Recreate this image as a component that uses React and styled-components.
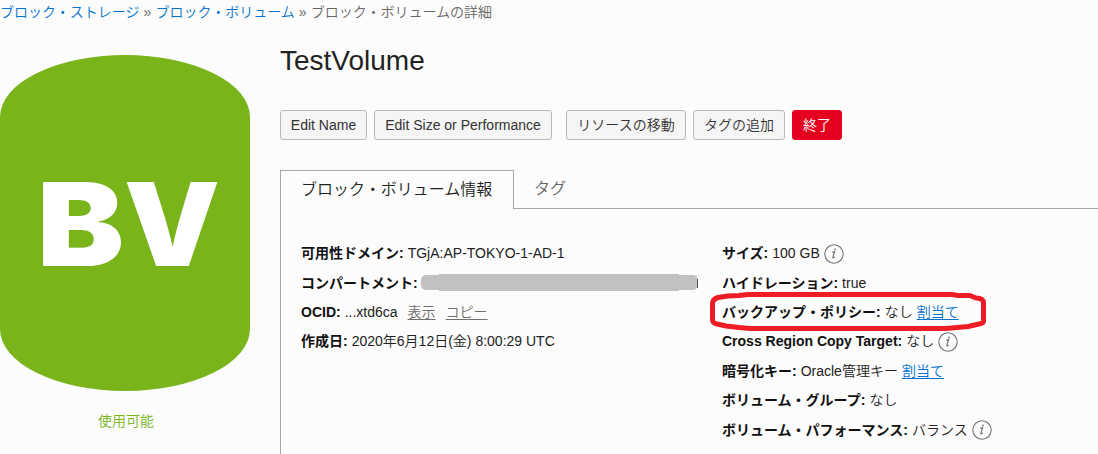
import React from 'react';
import styled, { createGlobalStyle } from 'styled-components';

const GlobalStyle = createGlobalStyle`
  * { box-sizing: border-box; }
  body {
    margin: 0;
    background: #fcfcfc;
    color: #222;
    font-family: "Liberation Sans", "Noto Sans CJK JP", sans-serif;
    font-size: 14px;
    font-weight: 350;
    overflow: hidden;
  }
`;

const Page = styled.div`
  position: relative;
  width: 1098px;
  height: 454px;
  overflow: hidden;
`;

const Breadcrumb = styled.nav`
  display: flex;
  height: 24px;
  line-height: 24px;
  color: #666;
  white-space: nowrap;
`;

const Separator = styled.span`
  width: 16px;
  text-align: center;
`;

const Crumb = styled.a`
  color: #0572ce;
`;

const Columns = styled.div`
  display: flex;
  gap: 30px;
`;

const Side = styled.aside`
  width: 250px;
  flex: none;
  padding-top: 31px;
`;

const Badge = styled.div`
  height: 336px;
  border-radius: 125px / 62px;
  background: #78b41a;

  svg { display: block; }
`;

const Status = styled.div`
  margin: 18px 0 0 2px;
  line-height: 24px;
  text-align: center;
  color: #78b41a;
`;

const Main = styled.main`
  flex: 1;
  min-width: 0;
`;

const Title = styled.h1`
  margin: 17px 0 0;
  height: 40px;
  line-height: 40px;
  font-size: 28px;
  font-weight: 400;
`;

const Toolbar = styled.div`
  display: flex;
  gap: 7px;
  margin-top: 29px;
`;

const Button = styled.button`
  width: ${(p) => p.$width}px;
  height: 30px;
  margin: 0 0 0 ${(p) => (p.$spaced ? 7 : 0)}px;
  padding: 0;
  border: 1px solid ${(p) => (p.$danger ? '#e6001f' : '#b4bac4')};
  border-radius: 3px;
  background: ${(p) => (p.$danger ? '#e6001f' : '#f5f5f5')};
  color: ${(p) => (p.$danger ? '#fff' : '#333')};
  font: inherit;
  line-height: 28px;
  white-space: nowrap;
`;

const Tabs = styled.div`
  display: flex;
  height: 39px;
  margin-top: 30px;
  font-size: 16px;
  line-height: 37px;
`;

const Tab = styled.div`
  flex: ${(p) => (p.$active ? '0 0 234px' : '1')};
  padding-left: 20px;
  border: 0 solid #a8a8a8;
  border-width: ${(p) => (p.$active ? '1px 1px 0 1px' : '0 0 1px 0')};
  color: ${(p) => (p.$active ? '#222' : '#666')};
`;

const Panel = styled.section`
  display: flex;
  height: 246px;
  padding: 30px 0 0 20px;
  border-left: 1px solid #a8a8a8;
`;

const Details = styled.div`
  width: ${(p) => p.$width}px;
`;

const Row = styled.div`
  display: flex;
  align-items: center;
  height: 29.4px;
  line-height: 29px;
  white-space: nowrap;
`;

const Label = styled.b`
  margin-right: 4px;
  font-weight: 700;
  color: #111;
`;

const Link = styled.a`
  margin-left: ${(p) => p.$gap || 4}px;
  color: ${(p) => (p.$muted ? '#707070' : '#0572ce')};
  text-decoration: underline;
  text-underline-offset: 2px;
`;

const Redaction = styled.span`
  display: flex;
  align-items: center;
  justify-content: center;
  width: 277px;
  height: 15px;
  margin: -2px 0 0 -1px;
  border-radius: 5px;
  background: #c1c1c1;

  &::before {
    content: '';
    flex: none;
    width: 240px;
    height: 17px;
    background: #c1c1c1;
  }
`;

const Remnant = styled.span`
  width: 1px;
  height: 9px;
  margin-left: -1px;
  background: #555;
`;

const InfoSvg = styled.svg`
  margin-left: 4px;
  flex: none;
`;

const Highlight = styled.svg`
  position: absolute;
  left: 706px;
  top: 288px;
`;

function Info() {
  return (
    <InfoSvg width="20" height="20" viewBox="0 0 20 20" fill="none" stroke="#777">
      <circle cx="10" cy="10" r="9.2" strokeWidth="1.1" />
      <path d="M8.3 8.2 10.6 7.8 8.8 13.3Q8.7 14.3 9.6 13.8L10.7 13" strokeWidth="1.2" />
      <circle cx="11" cy="5.5" r=".9" fill="#777" stroke="none" />
    </InfoSvg>
  );
}

export default function App() {
  return (
    <>
      <GlobalStyle />
      <Page>
        <Breadcrumb>
          <Crumb>ブロック・ストレージ</Crumb>
          <Separator>»</Separator>
          <Crumb>ブロック・ボリューム</Crumb>
          <Separator>»</Separator>
          <span>ブロック・ボリュームの詳細</span>
        </Breadcrumb>
        <Columns>
          <Side>
            <Badge>
              <svg width="250" height="336" viewBox="0 0 250 336" fill="#fff" fontFamily="Inter, sans-serif" fontWeight="900" fontSize="115.5">
                <text x="37" y="211" textLength="87" lengthAdjust="spacingAndGlyphs">B</text>
                <text x="124" y="211" textLength="96" lengthAdjust="spacingAndGlyphs">V</text>
              </svg>
            </Badge>
            <Status>使用可能</Status>
          </Side>
          <Main>
            <Title>TestVolume</Title>
            <Toolbar>
              <Button $width={87}>Edit Name</Button>
              <Button $width={178}>Edit Size or Performance</Button>
              <Button $width={120} $spaced>リソースの移動</Button>
              <Button $width={92}>タグの追加</Button>
              <Button $width={50} $danger>終了</Button>
            </Toolbar>
            <Tabs>
              <Tab $active>ブロック・ボリューム情報</Tab>
              <Tab>タグ</Tab>
            </Tabs>
            <Panel>
              <Details $width={421}>
                <Row><Label>可用性ドメイン:</Label>TGjA:AP-TOKYO-1-AD-1</Row>
                <Row><Label>コンパートメント:</Label><Redaction /><Remnant /></Row>
                <Row>
                  <Label>OCID:</Label>...xtd6ca
                  <Link $muted $gap={10}>表示</Link>
                  <Link $muted $gap={10}>コピー</Link>
                </Row>
                <Row><Label>作成日:</Label>2020年6月12日(金) 8:00:29 UTC</Row>
              </Details>
              <Details $width={370}>
                <Row><Label>サイズ:</Label>100 GB<Info /></Row>
                <Row><Label>ハイドレーション:</Label>true</Row>
                <Row><Label>バックアップ・ポリシー:</Label>なし<Link>割当て</Link></Row>
                <Row><Label>Cross Region Copy Target:</Label>なし<Info /></Row>
                <Row><Label>暗号化キー:</Label>Oracle管理キー<Link>割当て</Link></Row>
                <Row><Label>ボリューム・グループ:</Label>なし</Row>
                <Row><Label>ボリューム・パフォーマンス:</Label>バランス<Info /></Row>
              </Details>
            </Panel>
          </Main>
        </Columns>
        <Highlight width="284" height="46" viewBox="0 0 284 46" fill="none" stroke="#ee1c25" strokeWidth="5" strokeLinejoin="round">
          <path d="M6.5 16Q6.5 11 12 9.5L22 8 33 7.5 42 6.5H246L252 7.5H264L270 10Q277.5 10 277.5 15V33Q277.5 35.5 273 36L262 38.5 240 40.5H44L33 39.5 20 38 11 36Q6.5 35 6.5 32Z" />
        </Highlight>
      </Page>
    </>
  );
}
